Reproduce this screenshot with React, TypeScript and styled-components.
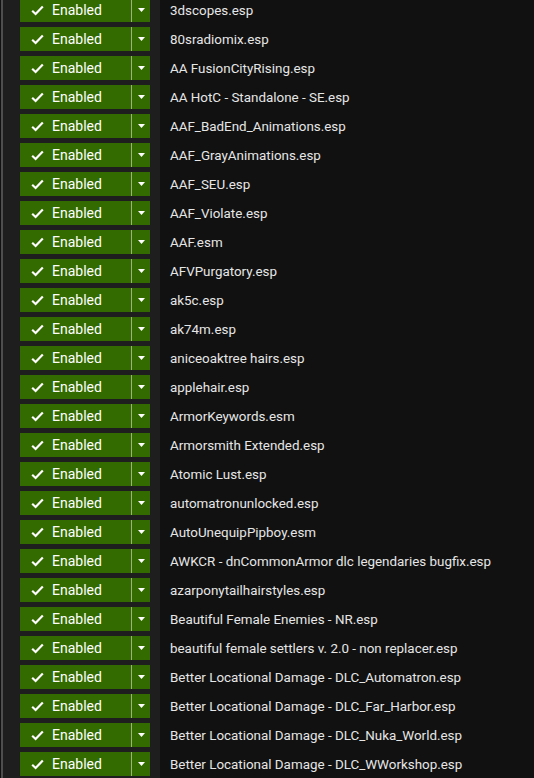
import React from "react";
import styled, { createGlobalStyle } from "styled-components";

const GlobalStyle = createGlobalStyle`
  html, body {
    margin: 0;
    padding: 0;
    background: #111111;
    overflow: hidden;
  }
`;

const PLUGINS = [
  "3dscopes.esp",
  "80sradiomix.esp",
  "AA FusionCityRising.esp",
  "AA HotC - Standalone - SE.esp",
  "AAF_BadEnd_Animations.esp",
  "AAF_GrayAnimations.esp",
  "AAF_SEU.esp",
  "AAF_Violate.esp",
  "AAF.esm",
  "AFVPurgatory.esp",
  "ak5c.esp",
  "ak74m.esp",
  "aniceoaktree hairs.esp",
  "applehair.esp",
  "ArmorKeywords.esm",
  "Armorsmith Extended.esp",
  "Atomic Lust.esp",
  "automatronunlocked.esp",
  "AutoUnequipPipboy.esm",
  "AWKCR - dnCommonArmor dlc legendaries bugfix.esp",
  "azarponytailhairstyles.esp",
  "Beautiful Female Enemies - NR.esp",
  "beautiful female settlers v. 2.0 - non replacer.esp",
  "Better Locational Damage - DLC_Automatron.esp",
  "Better Locational Damage - DLC_Far_Harbor.esp",
  "Better Locational Damage - DLC_Nuka_World.esp",
  "Better Locational Damage - DLC_WWorkshop.esp",
];

const List = styled.div`
  margin-top: -2px;
  margin-left: 1px;
  border-left: 2px solid #4e4e4e;
  display: flex;
  flex-direction: column;
  font-family: Roboto, "Liberation Sans", sans-serif;
`;

const Row = styled.div`
  display: flex;
  height: 29px;
`;

const LeftCell = styled.div`
  width: 157px;
  flex: none;
  background: #1e1e1e;
  padding-left: 17px;
  box-sizing: border-box;
`;

const SplitButton = styled.div`
  display: flex;
  width: 130px;
  height: 24px;
  background: #346b00;
  color: #ffffff;
`;

const MainPart = styled.div`
  width: 112px;
  display: flex;
  align-items: center;
  gap: 8px;
  padding-left: 11px;
  box-sizing: border-box;
  font-size: 14px;
  border-right: 1px solid #9bb37e;
`;

const CaretPart = styled.div`
  flex: 1;
  display: flex;
  align-items: center;
  justify-content: center;
`;

const Name = styled.div`
  flex: 1;
  padding-left: 10px;
  height: 24px;
  display: flex;
  align-items: center;
  color: #e6e6e6;
  font-size: 13.4px;
  white-space: nowrap;
`;

const Check = () => (
  <svg width="13" height="11" viewBox="0 0 13 11">
    <path d="M1.2 5.8 L4.6 9 L11.8 1.6" fill="none" stroke="#fff" strokeWidth="2.2" />
  </svg>
);

const Caret = () => (
  <svg width="7" height="4" viewBox="0 0 7 4">
    <path d="M0 0 H7 L3.5 4 Z" fill="#fff" />
  </svg>
);

const App = () => (
  <>
    <GlobalStyle />
    <List>
      {PLUGINS.map((p) => (
        <Row key={p}>
          <LeftCell>
            <SplitButton>
              <MainPart>
                <Check />
                <span>Enabled</span>
              </MainPart>
              <CaretPart>
                <Caret />
              </CaretPart>
            </SplitButton>
          </LeftCell>
          <Name>{p}</Name>
        </Row>
      ))}
    </List>
  </>
);

export default App;
